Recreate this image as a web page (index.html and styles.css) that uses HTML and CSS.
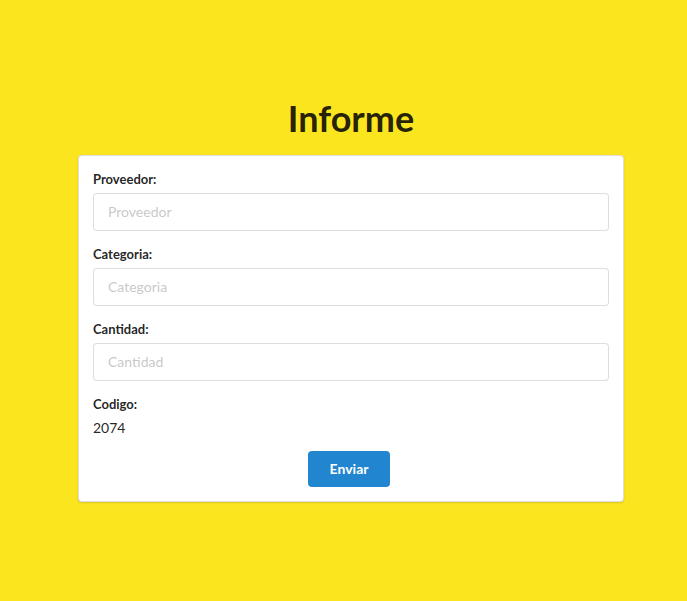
FILE: index.html
```html
<!DOCTYPE html>
<html lang="es">
<head>
<meta charset="utf-8">
<title>Informe</title>
<link rel="stylesheet" href="styles.css">
</head>
<body>
<main class="page">
  <div class="container">
    <h1 class="title">Informe</h1>
    <form class="card">
      <div class="field">
        <label class="label" for="proveedor">Proveedor:</label>
        <input class="input" id="proveedor" type="text" placeholder="Proveedor">
      </div>
      <div class="field">
        <label class="label" for="categoria">Categoria:</label>
        <input class="input" id="categoria" type="text" placeholder="Categoria">
      </div>
      <div class="field">
        <label class="label" for="cantidad">Cantidad:</label>
        <input class="input" id="cantidad" type="text" placeholder="Cantidad">
      </div>
      <div class="field field-last">
        <label class="label">Codigo:</label>
        <div class="value">2074</div>
      </div>
      <div class="actions">
        <button class="button" type="button">Enviar</button>
      </div>
    </form>
  </div>
</main>
</body>
</html>
```

FILE: styles.css
```css
html, body {
  margin: 0;
  padding: 0;
}
body {
  background: #fbe51f;
  font-family: Lato, "Helvetica Neue", Arial, sans-serif;
  font-size: 14px;
  line-height: 1.4285;
  color: rgba(0, 0, 0, 0.87);
  min-height: 601px;
}
.page {
  padding: 95px 0 0 15px;
}
.container {
  width: 546px;
  margin: 0 auto;
}
.title {
  margin: 0 0 14px;
  font-size: 36px;
  line-height: 1.28571429;
  font-weight: 700;
  text-align: center;
  color: rgba(0, 0, 0, 0.87);
}
.card {
  background: #fff;
  border: 1px solid rgba(34, 36, 38, 0.15);
  border-radius: 4px;
  box-shadow: 0 1px 2px 0 rgba(34, 36, 38, 0.15);
  padding: 14px;
  margin: 0;
}
.field {
  margin: 0 0 14.4px;
}
.field-last {
  margin-bottom: 13.4px;
}
.label {
  display: block;
  margin: 0 0 4px;
  font-size: 13px;
  line-height: 1.4285;
  font-weight: 700;
  color: rgba(0, 0, 0, 0.87);
}
.input {
  display: block;
  box-sizing: border-box;
  width: 100%;
  height: 38px;
  margin: 0;
  font-family: Lato, "Helvetica Neue", Arial, sans-serif;
  font-size: 14px;
  line-height: 17px;
  padding: 9.5px 14px;
  border: 1px solid rgba(34, 36, 38, 0.15);
  border-radius: 4px;
  color: rgba(0, 0, 0, 0.87);
  background: #fff;
  outline: none;
}
.input::placeholder {
  color: rgba(191, 191, 191, 0.87);
}
.value {
  line-height: 20px;
  font-size: 14px;
}
.actions {
  display: flex;
  justify-content: center;
}
.button {
  font-family: Lato, "Helvetica Neue", Arial, sans-serif;
  font-size: 14px;
  font-weight: 700;
  line-height: 14px;
  padding: 11px 22px;
  margin: 0 4px 0 0;
  border: none;
  border-radius: 4px;
  background: #2185d0;
  color: #fff;
  cursor: pointer;
}
```
